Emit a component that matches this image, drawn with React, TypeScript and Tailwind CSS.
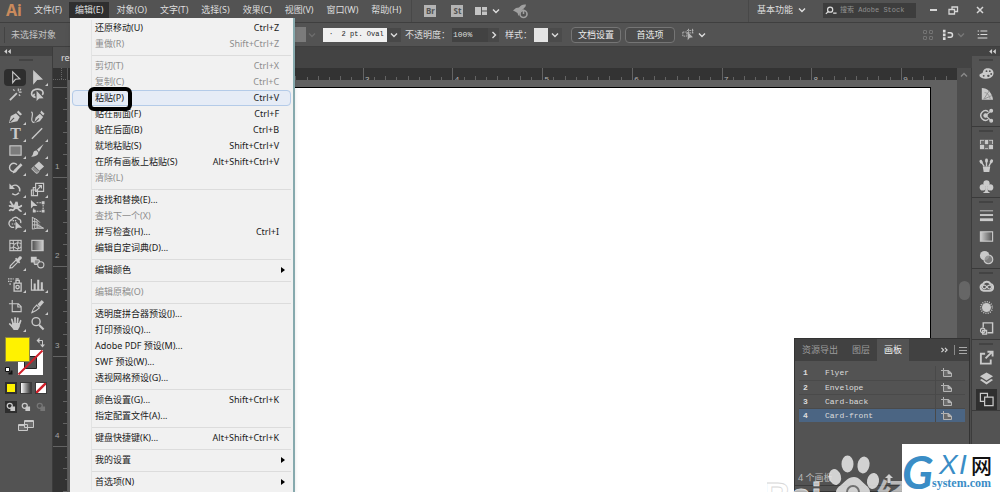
import React from "react";

type IconProps = { children: React.ReactNode; className?: string };

const Icon: React.FC<IconProps> = ({ children, className = "h-4 w-4" }) => (
  <svg
    viewBox="0 0 16 16"
    className={className}
    fill="none"
    stroke="currentColor"
    strokeWidth="1.2"
    aria-hidden="true"
  >
    {children}
  </svg>
);

const Chevron: React.FC<{ className?: string }> = ({
  className = "h-2 w-2",
}) => (
  <svg viewBox="0 0 8 8" className={className} fill="none" stroke="currentColor" strokeWidth="1.4" aria-hidden="true">
    <path d="M1 2.5 4 5.5 7 2.5" />
  </svg>
);

type Tool = { name: string; icon: React.ReactNode; more?: boolean; active?: boolean };

const toolGroups: Tool[][] = [
  [
    { name: "选择工具", active: true, icon: <path d="M5 2v11.5l3-3.6 4.6-.4z" /> },
    { name: "直接选择工具", more: true, icon: <path fill="currentColor" d="M4 1.5v12.5l3.4-4 5.1-.4z" /> },
    {
      name: "魔棒工具",
      icon: (
        <>
          <path strokeWidth="2" d="M2 14 9.5 6.5" />
          <path d="M11 1.5v3M14.5 5.5h-3M5.5 2.5l1.5 1.5M13 9.5 11.5 8M14 2l-1.5 1.5" />
        </>
      ),
    },
    {
      name: "套索工具",
      icon: (
        <>
          <path strokeWidth="1.8" d="M6 11C2.500 10.500 1 8 2 5.500 3.200 2.500 8 1.500 11.500 3c3 1.300 3 4 1.500 5.500M5 7.500c-1.500 1-1.500 3 .5 3" />
          <path fill="currentColor" stroke="none" d="M7 4v11l2.800-2.800 4.700-.2z" />
        </>
      ),
    },
  ],
  [
    {
      name: "钢笔工具",
      more: true,
      icon: (
        <>
          <path fill="currentColor" stroke="none" d="m1 15 2-7.500 5.500-3 4 4-2.500 4.500z" />
          <path fill="currentColor" stroke="none" d="m9.500 3.500 1.500-2 4 4-2 1.500z" />
          <path stroke="#535353" d="m2 14 4.500-4.500" />
        </>
      ),
    },
    {
      name: "曲率工具",
      icon: (
        <>
          <path fill="currentColor" stroke="none" d="m4.500 15 1.500-6 4.500-4 3.500 3.500-3.500 4.500zM11 4l1-2.500 3.500 3.500-1.500 2z" />
          <path stroke="#535353" d="m5 14.500 4.500-4.500" />
          <path d="M1.500 3C4.500 5 1 9 2 12.500c.3 1.500 1.500 2 2.500 2" />
        </>
      ),
    },
    {
      name: "文字工具",
      more: true,
      icon: (
        <text x="8" y="13.500" textAnchor="middle" fill="currentColor" stroke="none" fontSize="17" fontWeight="700" fontFamily="Liberation Serif, serif">
          T
        </text>
      ),
    },
    { name: "直线段工具", more: true, icon: <path strokeWidth="1.500" d="M2 13.500 13 2.500" /> },
    { name: "矩形工具", more: true, icon: <rect x="2" y="3" width="12" height="10" fill="#7c7c7c" /> },
    {
      name: "画笔工具",
      more: true,
      icon: (
        <>
          <path fill="currentColor" stroke="none" d="M14.500 1 7.500 7l2 2.500zM7 8l2 2.500c-.5 3-4 4.500-8 4 2-.8 2-2 2.500-4C4 8.500 5.500 7.800 7 8z" />
        </>
      ),
    },
    {
      name: "Shaper 工具",
      more: true,
      icon: (
        <>
          <path strokeWidth="1.500" d="M9.500 11A4.500 4.500 0 1 1 9.500 5" />
          <path strokeWidth="2.800" d="m7 12 7.500-7.500" />
          <path fill="currentColor" stroke="none" d="m5 14.500 1-3.500 2.500 2z" />
        </>
      ),
    },
    {
      name: "橡皮擦工具",
      more: true,
      icon: (
        <>
          <path fill="currentColor" stroke="none" d="m9.500 1.500 5.500 5.500-5 4.500L4.500 6z" />
          <path fill="#8e8e8e" strokeWidth="1" d="M4 7 1.800 9.500l4.500 4.500h1.500L10 12" />
        </>
      ),
    },
  ],
  [
    {
      name: "旋转工具",
      more: true,
      icon: (
        <>
          <path strokeWidth="1.600" d="M4 5a5 5 0 1 1 .5 7.500" strokeDasharray="13 1.500" />
          <path fill="currentColor" stroke="none" d="M1.500 1.500v6h6z" />
        </>
      ),
    },
    {
      name: "比例缩放工具",
      more: true,
      icon: <path d="M6 1.500h8.500V10H6zM1.500 8.500h6.500v6H1.500zM6 6H3.500v8.500M8 10v4.500M7 9l5-5M9 3.800h3.200V7" />,
    },
    {
      name: "宽度工具",
      more: true,
      icon: (
        <>
          <path strokeWidth="2" d="M2 2.500c2 1 1.500 4 4 4.500M1 7.500c3-1 4 2 6 0l2-4.500M9 3c2 2-.5 5 2 5.500s2-1.500 4-1.500M1.500 13c2-4 3 1 5-2s3-2 4.500-.5 2 3 3.500 2" />
          <circle cx="8.500" cy="8.500" r="1.800" fill="currentColor" />
        </>
      ),
    },
    {
      name: "自由变换工具",
      icon: (
        <>
          <path fill="currentColor" stroke="none" d="M1 1v9l2.500-2.500H8z" />
          <path strokeDasharray="2 1" d="M7 4h7v9H4v-3" />
          <path fill="currentColor" stroke="none" d="M12.500 2.500h3v3h-3zM12.500 11.500h3v3h-3zM3 11.500h3v3H3z" />
        </>
      ),
    },
    {
      name: "形状生成器工具",
      more: true,
      icon: (
        <>
          <path strokeWidth="1.400" d="M6.500 12a4 4 0 0 1-2.500-8 4 4 0 0 1 7-1c2 .5 3 2 2.500 4.500" />
          <path strokeDasharray="1.500 1" d="M4 8.500h4M5 5.500c1.500-1.500 3.500-1 4.500.5" />
          <path fill="currentColor" stroke="none" d="M8 5.500v9.500l2.500-2.500H15z" />
        </>
      ),
    },
    {
      name: "透视网格工具",
      more: true,
      icon: (
        <>
          <path strokeWidth="1" d="M2.500 1v13M2.500 1.500l5 2.500v9l-5 1M5 2.500V13M2.500 5.500l5 1M2.500 9.500h5M7.500 4l3 3M7.500 13h7M7.500 9.500l7 3.500" />
          <path fill="currentColor" fillOpacity=".4" stroke="none" d="M7.500 5.500 14.500 13.500h-7z" />
        </>
      ),
    },
  ],
  [
    {
      name: "网格工具",
      icon: (
        <>
          <rect x="2" y="2.500" width="12" height="11" />
          <path strokeWidth="1.100" d="M2 6c3-2 4 2 6 0s3-1 6 0M2 10.500c3 1 4-2 6 0s4 1 6-1M6 2.500c-2 3 2 4 0 6s1 3 0 5M10.500 2.500c1 3-2 4 0 6s-1 3 0 5" />
        </>
      ),
    },
    {
      name: "渐变工具",
      icon: (
        <>
          <defs>
            <linearGradient id="toolGradient">
              <stop offset="0" stopColor="#4a4a4a" />
              <stop offset="1" stopColor="#d0d0d0" />
            </linearGradient>
          </defs>
          <rect x="2" y="2.500" width="12" height="11" fill="url(#toolGradient)" />
        </>
      ),
    },
    {
      name: "吸管工具",
      more: true,
      icon: (
        <>
          <path d="m2 14 .5-2.500 6-6 2 2-6 6z" />
          <path fill="currentColor" stroke="none" d="m7.500 4 1.200-1 1.300 1 2-2.500c2-1 3.500 1 2.500 2.500L12 6.500l1 1.200L11.800 9z" />
        </>
      ),
    },
    {
      name: "混合工具",
      icon: (
        <>
          <path fill="currentColor" d="M1.500 2.500h5v5h-5z" />
          <rect x="4.500" y="5" width="5.500" height="5" rx="1" fill="#888" />
          <circle cx="11.500" cy="10.500" r="3.300" fill="#535353" />
        </>
      ),
    },
  ],
  [
    {
      name: "符号喷枪工具",
      more: true,
      icon: (
        <>
          <path strokeWidth="1.400" d="M6.500 6.500h7.500v8.500H6.500zM8.500 6V3.500h3.500V6M8 2h3.500" />
          <circle cx="10.200" cy="10.700" r="1.800" strokeWidth="1.400" />
          <path strokeWidth="1.500" strokeDasharray="1.500 1" d="M0 2h6M0 4.700h5M1.500 7.500h2" />
        </>
      ),
    },
    {
      name: "柱形图工具",
      more: true,
      icon: (
        <>
          <path d="M1.500 2v12h13.500" />
          <path strokeWidth="2.200" d="M5 14V7M8.800 14V3M12.600 14V5.500" />
        </>
      ),
    },
  ],
  [
    { name: "画板工具", icon: <path d="M4.500 1v3.500M1 5h3.500M4.500 5h6.500l3 3v5.500h-9.500zM10.500 5v3.500h3.500" /> },
    {
      name: "切片工具",
      more: true,
      icon: (
        <>
          <path d="M2 14.500c1-4 3-6.500 5-8l3 3c-2 2-4.500 4-8 5z" />
          <path fill="currentColor" stroke="none" d="M8 5.500 12.500 1 15 3.500l-4.500 5z" />
        </>
      ),
    },
    {
      name: "抓手工具",
      more: true,
      icon: (
        <>
          <path strokeWidth="1.800" strokeLinecap="round" d="M5.500 8.500 4 3.500M7.500 8V2M10 8l.5-5.500M12 9l1.500-4M5 11.500 1.800 8.500" />
          <path fill="currentColor" stroke="none" d="M4.500 7.500h8.500l-.5 4-2 3.500H6L3.500 11z" />
        </>
      ),
    },
    {
      name: "缩放工具",
      icon: (
        <>
          <circle cx="6.500" cy="6" r="4.300" strokeWidth="1.500" />
          <path strokeWidth="2.200" d="m9.800 9.500 4.700 4.800" />
        </>
      ),
    },
  ],
];

const DoubleArrow: React.FC = () => (
  <svg viewBox="0 0 8 6" className="h-[5px] w-[7px]" fill="#d0d0d0" aria-hidden="true">
    <path d="M3.500 0v6L0 3zM8 0v6L4.500 3z" />
  </svg>
);

const ToolBar: React.FC = () => (
  <aside className="flex w-[53px] shrink-0 flex-col border-r border-[#3c3c3c] bg-[#535353] text-[#c9c9c9]">
    <div className="flex h-[9px] shrink-0 items-center bg-[#434343] pl-1">
      <DoubleArrow />
    </div>
    <div className="flex h-[13px] shrink-0 justify-center pt-[3px]">
      <span className="h-[2px] w-[14px] bg-[#434343]" />
    </div>
    <div className="flex flex-col gap-[5px] px-1">
      {toolGroups.map((group, i) => (
        <div key={i} className="grid grid-cols-2">
          {group.map((tool) => (
            <button
              key={tool.name}
              type="button"
              aria-label={tool.name}
              className={
                tool.active
                  ? "relative flex h-[17px] items-center justify-center rounded-sm bg-[#2e2e2e]"
                  : "relative flex h-[17px] items-center justify-center"
              }
            >
              <Icon className="h-[15px] w-[15px]">{tool.icon}</Icon>
              {tool.more && (
                <svg viewBox="0 0 3 3" className="absolute right-0 bottom-0 h-[3px] w-[3px]" aria-hidden="true">
                  <path fill="currentColor" d="M3 0v3H0z" />
                </svg>
              )}
            </button>
          ))}
        </div>
      ))}
    </div>
    <div className="px-1 pt-[2px] pb-[2px]">
      <svg viewBox="0 0 44 42" className="h-[42px] w-[44px]" fill="none" aria-hidden="true">
        <path fill="#fff" d="M14 16h25v25H14z" />
        <path fill="#535353" stroke="#222" d="M20.500 22.500h12v12h-12z" />
        <path stroke="#d0202a" strokeWidth="2" d="M14.500 40.500 38.500 16.500" />
        <path fill="#fff200" stroke="#8f8a40" d="M1.500 3.500h24v24h-24z" />
        <path stroke="#c9c9c9" d="M34 6.500h4.500V11" />
        <path fill="#c9c9c9" d="M35.500 3.500v6l-3-3zM36 10.500h5l-2.500 3z" />
        <path fill="#fff" stroke="#111" d="M1.500 33.500h4v4h-4z" />
        <path stroke="#111" strokeWidth="2" d="M4.500 39.500h3v-3" />
      </svg>
    </div>
    <div className="flex gap-[3px] px-[5px] pt-1">
      <button type="button" aria-label="颜色" className="h-3 w-3 border-2 border-[#2e2e2e] bg-[#fff200]" />
      <button type="button" aria-label="渐变" className="h-3 w-3 border border-[#3a3a3a] bg-gradient-to-r from-white to-[#333]" />
      <button type="button" aria-label="无" className="h-3 w-3 border border-[#3a3a3a] bg-white">
        <svg viewBox="0 0 10 10" className="h-[10px] w-[10px]" aria-hidden="true">
          <path stroke="#d0202a" strokeWidth="2.500" d="M0 10 10 0" />
        </svg>
      </button>
    </div>
    <div className="flex gap-[3px] px-[5px] pt-[7px]">
      {["正常绘图", "背面绘图", "内部绘图"].map((name, i) => (
        <button
          key={name}
          type="button"
          aria-label={name}
          className={
            i === 0
              ? "flex h-3 w-3 items-center justify-center bg-[#2e2e2e]"
              : i === 1
                ? "flex h-3 w-3 items-center justify-center"
                : "flex h-3 w-3 items-center justify-center opacity-30"
          }
        >
          <Icon className="h-[10px] w-[10px]">
            <circle cx="6" cy="6" r="4" strokeWidth="2" />
            <path fill="currentColor" stroke="none" d="M8 7h6.500v7.500H7V10z" />
          </Icon>
        </button>
      ))}
    </div>
    <div className="flex justify-center pt-[6px]">
      <button type="button" aria-label="更改屏幕模式">
        <svg viewBox="0 0 18 13" className="h-[13px] w-[18px]" fill="#6c6c6c" stroke="currentColor" aria-hidden="true">
          <path d="M1.500 5.500h9v6h-9zM7.500 1.500h9v7h-9z" />
          <path d="M7.500 2.500h9M1.500 6.500h6" />
        </svg>
      </button>
    </div>
  </aside>
);

type MenuEntry = {
  label: string;
  keys?: string;
  disabled?: boolean;
  sub?: boolean;
  active?: boolean;
};

const editMenu: MenuEntry[][] = [
  [
    { label: "还原移动(U)", keys: "Ctrl+Z" },
    { label: "重做(R)", keys: "Shift+Ctrl+Z", disabled: true },
  ],
  [
    { label: "剪切(T)", keys: "Ctrl+X", disabled: true },
    { label: "复制(C)", keys: "Ctrl+C", disabled: true },
    { label: "粘贴(P)", keys: "Ctrl+V", active: true },
    { label: "贴在前面(F)", keys: "Ctrl+F" },
    { label: "贴在后面(B)", keys: "Ctrl+B" },
    { label: "就地粘贴(S)", keys: "Shift+Ctrl+V" },
    { label: "在所有画板上粘贴(S)", keys: "Alt+Shift+Ctrl+V" },
    { label: "清除(L)", disabled: true },
  ],
  [
    { label: "查找和替换(E)..." },
    { label: "查找下一个(X)", disabled: true },
    { label: "拼写检查(H)...", keys: "Ctrl+I" },
    { label: "编辑自定词典(D)..." },
  ],
  [{ label: "编辑颜色", sub: true }],
  [{ label: "编辑原稿(O)", disabled: true }],
  [
    { label: "透明度拼合器预设(J)..." },
    { label: "打印预设(Q)..." },
    { label: "Adobe PDF 预设(M)..." },
    { label: "SWF 预设(W)..." },
    { label: "透视网格预设(G)..." },
  ],
  [
    { label: "颜色设置(G)...", keys: "Shift+Ctrl+K" },
    { label: "指定配置文件(A)..." },
  ],
  [{ label: "键盘快捷键(K)...", keys: "Alt+Shift+Ctrl+K" }],
  [{ label: "我的设置", sub: true }],
  [{ label: "首选项(N)", sub: true }],
];

const EditMenu: React.FC = () => (
  <div className="absolute top-[18px] left-px z-20 w-[225px] border-r-2 border-[#86a9ad] bg-[#f1f1f1] px-[2px] py-[2px] text-[9px] text-[#1a1a1a] shadow-md">
    {editMenu.map((group, i) => (
      <div key={i}>
        {i > 0 && (
          <div className="flex h-[6px] items-center">
            <span className="h-full w-5 border-r border-[#e2e3e3]" />
            <span className="h-px flex-1 bg-[#dcdcdc]" />
          </div>
        )}
        {group.map((item) => (
          <button
            key={item.label}
            type="button"
            disabled={item.disabled}
            className={
              item.active
                ? "relative flex h-4 w-full items-center rounded-sm bg-[#e6ecf6] text-left whitespace-nowrap outline outline-[#b4cbe8] -outline-offset-1"
                : "flex h-4 w-full items-center text-left whitespace-nowrap disabled:text-[#8d8d8d]"
            }
          >
            <span className="h-full w-5 shrink-0 border-r border-[#e2e3e3]" />
            <span className="flex-1 pl-[3px]">{item.label}</span>
            {item.keys && <span className="pr-3">{item.keys}</span>}
            {item.sub && (
              <svg viewBox="0 0 4 6" className="mr-[6px] h-[6px] w-1" aria-hidden="true">
                <path d="M0 0v6l4-3z" />
              </svg>
            )}
            {item.active && (
              <span className="absolute -top-[3px] left-4 h-[24px] w-[44px] rounded-md border-4 border-black" />
            )}
          </button>
        ))}
      </div>
    ))}
  </div>
);

const menus = ["文件(F)", "编辑(E)", "对象(O)", "文字(T)", "选择(S)", "效果(C)", "视图(V)", "窗口(W)", "帮助(H)"];

const MenuBar: React.FC = () => (
  <header className="flex h-[23px] shrink-0 items-start border-b border-[#3f3f3f] text-[9px] text-[#dedede]">
    <span className="w-7 pl-[6px] text-[16px] leading-5 font-bold text-[#c98a5c]">Ai</span>
    <nav className="flex gap-px">
      {menus.map((menu) => (
        <div key={menu} className="relative pt-[2px]">
          <button
            type="button"
            className={
              menu === "编辑(E)"
                ? "h-4 bg-[#2f2f2f] px-[6px] leading-4 whitespace-nowrap"
                : "h-4 px-[6px] leading-4 whitespace-nowrap"
            }
          >
            {menu}
          </button>
          {menu === "编辑(E)" && <EditMenu />}
        </div>
      ))}
    </nav>
    <div className="ml-1 flex h-[22px] items-center border-l border-[#484848] pl-3">
      <button type="button" className="h-3 w-3 bg-[#b4b4b4] text-center text-[8px] leading-3 font-bold text-[#535353]">
        Br
      </button>
      <button type="button" className="ml-[15px] h-3 w-3 bg-[#b4b4b4] text-center text-[8px] leading-3 font-bold text-[#535353]">
        St
      </button>
      <button type="button" aria-label="排列文档" className="ml-3 flex items-center gap-[5px]">
        <svg viewBox="0 0 12 8" className="h-2 w-3" fill="#c4c4c4" aria-hidden="true">
          <path d="M0 0h6v8H0zM7 0h5v3.500H7zM7 4.500h5V8H7z" />
        </svg>
        <Chevron />
      </button>
      <button type="button" aria-label="GPU 性能" className="ml-3 text-[#a0a0a0]">
        <Icon>
          <path fill="currentColor" stroke="none" d="M1 7.500 4 5l3-.5C9 2 11 1 14 1.500l-.5 2L8.500 9l-2 4-1-3L3 8.500z" />
          <circle cx="11.500" cy="11" r="3.500" fill="#535353" strokeWidth="1.600" />
          <path strokeWidth="1.500" d="M11.500 6.500V11" />
        </Icon>
      </button>
    </div>
    <div className="ml-auto flex h-[22px] items-center border-l border-[#484848] pb-[2px] pl-2">
      <select aria-label="工作区" className="w-[36px] appearance-none">
        <option>基本功能</option>
      </select>
      <Chevron className="ml-[5px] h-2 w-2" />
      <label className="ml-[17px] flex h-[15px] w-[93px] items-center gap-[3px] bg-[#3d3d3d] pl-[2px]">
        <svg viewBox="0 0 14 10" className="h-[9px] w-3 shrink-0" fill="none" stroke="currentColor" strokeWidth="1.400" aria-hidden="true">
          <circle cx="6" cy="4" r="3" />
          <path d="M4 6 1 9M9.500 8h4" />
        </svg>
        <input
          type="search"
          aria-label="搜索 Adobe Stock"
          placeholder="搜索 Adobe Stock"
          className="w-full min-w-0 font-['Liberation_Mono','Noto_Sans_CJK_SC',monospace] text-[7px] placeholder:text-[#909090]"
        />
      </label>
      <button type="button" aria-label="最小化" className="ml-3 flex h-4 w-[10px] items-center justify-center">
        <span className="h-[2px] w-[7px] bg-[#d6d6d6]" />
      </button>
      <button type="button" aria-label="还原" className="ml-[10px]">
        <svg viewBox="0 0 11 9" className="h-[9px] w-[11px]" fill="none" stroke="#d6d6d6" strokeWidth="1.300" aria-hidden="true">
          <path d="M1 3.500h5.500V8H1zM4 3V1h5.500v4.500H7" />
        </svg>
      </button>
      <button type="button" aria-label="关闭" className="mr-4 ml-[17px]">
        <svg viewBox="0 0 8 8" className="h-2 w-2" stroke="#d6d6d6" strokeWidth="1.500" aria-hidden="true">
          <path d="m1 1 6 6M7 1 1 7" />
        </svg>
      </button>
    </div>
  </header>
);

const ControlBar: React.FC = () => (
  <div className="flex h-6 shrink-0 items-center border-b border-[#3f3f3f] text-[9px] whitespace-nowrap text-[#dcdcdc]">
    <div className="flex w-[286px] items-center">
      <span className="ml-1 h-4 w-px bg-[#434343]" />
      <span className="ml-[6px] text-[#c4c4c4]">未选择对象</span>
    </div>
    <span className="h-[15px] w-5 bg-[#7b7b7b]" />
    <Chevron className="mr-[7px] ml-[2px] h-2 w-2 text-[#6c6c6c]" />
    <label className="flex items-center">
      <select
        aria-label="画笔定义"
        className="h-[14px] w-[64px] appearance-none bg-[#f0f0f0] pl-[6px] font-['Liberation_Mono',monospace] text-[7px] text-[#222]"
      >
        <option>{"·\u00a0\u00a02 pt. Oval"}</option>
      </select>
      <span className="flex h-[14px] w-[14px] items-center justify-center bg-[#484848]">
        <Chevron />
      </span>
    </label>
    <label htmlFor="opacity" className="ml-1">
      不透明度：
    </label>
    <input
      id="opacity"
      defaultValue="100%"
      className="ml-[2px] h-[14px] w-9 bg-[#424242] pl-[1px] font-['Liberation_Mono',monospace] text-[8px]"
    />
    <button type="button" aria-label="不透明度滑块" className="flex h-[14px] w-[11px] items-center justify-center bg-[#484848]">
      <Chevron className="h-2 w-2 -rotate-90" />
    </button>
    <span className="ml-[6px]">样式：</span>
    <button type="button" aria-label="图形样式" className="ml-[2px] flex items-center">
      <span className="h-[14px] w-[14px] bg-[#e4e4e4]" />
      <span className="flex h-[14px] w-[14px] items-center justify-center bg-[#4b4b4b]">
        <Chevron />
      </span>
    </button>
    <button type="button" className="ml-[9px] h-4 w-[50px] rounded-sm border border-[#757575] bg-[#4b4b4b] text-[#ececec]">
      文档设置
    </button>
    <button type="button" className="ml-1 h-4 w-[50px] rounded-sm border border-[#757575] bg-[#4b4b4b] text-[#ececec]">
      首选项
    </button>
    <button type="button" aria-label="选择类似的对象" className="ml-[7px] flex items-center gap-[3px]">
      <Icon className="h-[13px] w-[13px] text-[#b4b4b4]">
        <path strokeDasharray="2 1" d="M1 5h5v5H1zM8 1v6M13 1v6M6 3h9M6 6h9" />
        <path fill="currentColor" stroke="none" d="M7 5v10l2.500-3 4-.5z" />
      </Icon>
      <Chevron />
    </button>
    <div className="ml-auto flex items-center pr-3">
      <Icon className="h-3 w-3 text-[#7d7d7d]">
        <path d="M2 2h4v4H2zM10 2h4v4h-4zM2 10h4v4H2zM10 10h4v4h-4z" strokeDasharray="3 1" />
      </Icon>
      <button type="button" aria-label="对齐像素" className="ml-2 flex items-center gap-[3px]">
        <Icon className="h-3 w-3">
          <path strokeWidth="3.500" strokeDasharray="3.500 1.500" d="M3 1v14" />
          <path strokeWidth="2" d="M7.500 5h3.500a2.500 2.500 0 0 1 0 6H7.500" />
        </Icon>
        <Chevron className="h-2 w-2 text-[#777]" />
      </button>
      <button type="button" aria-label="控制面板菜单" className="ml-3">
        <Icon className="h-[11px] w-[11px]">
          <path strokeWidth="1.500" d="M5 3h10M5 8h10M1 13h14M1 3h2M1 8h2" />
        </Icon>
      </button>
    </div>
  </div>
);

// one inch on the rulers, in pixels
const UNIT = 89.7;
const EIGHTHS = Array.from({ length: 88 }, (_, i) => i);

const HorizontalRuler: React.FC = () => (
  <div className="h-3 shrink-0 overflow-hidden bg-[#333]">
    <svg className="h-full w-full" aria-hidden="true">
      {EIGHTHS.map((i) => {
        const x = Math.round(25.6 + (i * UNIT) / 8);
        return <path key={i} stroke="#636363" d={i % 8 === 0 ? `M${x}.5 0v12` : i % 2 === 0 ? `M${x}.5 8v4` : `M${x}.5 9v3`} />;
      })}
      {[3, 4, 5, 6, 7, 8, 9].map((n) => (
        <text key={n} x={28 + n * UNIT} y="14" fill="#b4b4b4" fontSize="8" fontFamily="Liberation Sans, sans-serif">
          {n}
        </text>
      ))}
    </svg>
  </div>
);

const VerticalRuler: React.FC = () => (
  <div className="w-[15px] shrink-0 overflow-hidden border-r border-[#5a5a5a] bg-[#333]">
    <svg className="h-full w-full" aria-hidden="true">
      <path stroke="#666" strokeDasharray="1 1" d="M0 11.500h14M8.500 0v12" />
      {EIGHTHS.slice(0, 40).map((i) => {
        const y = Math.round(19 + (i * UNIT) / 8);
        return <path key={i} stroke="#636363" d={i % 8 === 0 ? `M0 ${y}.5h14` : i % 2 === 0 ? `M10 ${y}.5h4` : `M12 ${y}.5h2`} />;
      })}
      {[1, 2, 3, 4].map((n) => (
        <text key={n} x="2" y={11 + n * UNIT} fill="#a4a4a4" fontSize="8" fontFamily="Liberation Sans, sans-serif">
          {n}
        </text>
      ))}
    </svg>
  </div>
);

const artboards = ["Flyer", "Envelope", "Card-back", "Card-front"];

const Watermark: React.FC = () => (
  <svg viewBox="0 0 140 37" className="pointer-events-none absolute right-[65px] bottom-0 h-[37px] w-[140px]" aria-hidden="true">
    <text x="-3" y="54" fill="#fff" fillOpacity=".65" stroke="#d8d8d8" strokeWidth=".8" fontSize="37" fontWeight="700" fontFamily="Liberation Sans, sans-serif">
      Bai
    </text>
    <text x="110" y="52" fill="#fff" fillOpacity=".6" fontSize="32" fontWeight="700" fontFamily="Noto Sans CJK SC, sans-serif">
      经
    </text>
    <g fill="#e4e4e4" fillOpacity=".88">
      <ellipse cx="80.500" cy="9" rx="6" ry="8.500" />
      <ellipse cx="96.500" cy="10" rx="6" ry="8.500" transform="rotate(10 96.500 10)" />
      <ellipse cx="68" cy="22" rx="6" ry="8" transform="rotate(-15 68 22)" />
      <ellipse cx="106" cy="26" rx="6" ry="8" transform="rotate(10 106 26)" />
      <path d="M87 22c5 0 8 5 13 9 2 2 3 4 3 6H69c0-3 2-5 5-7 5-4 7-8 13-8z" />
    </g>
    <path fill="none" stroke="#707070" strokeWidth="2" d="M80 37a6 6 0 0 1 12 0" />
  </svg>
);

const ArtboardPanel: React.FC = () => (
  <section className="absolute right-[2px] bottom-0 flex h-[154px] w-[176px] flex-col border border-[#333] bg-[#535353] text-[9px] text-[#dcdcdc]">
    <div className="flex h-[22px] shrink-0 items-center bg-[#414141] text-[#9c9c9c]">
      <button type="button" className="px-[7px] whitespace-nowrap">资源导出</button>
      <button type="button" className="px-[7px] whitespace-nowrap">图层</button>
      <button type="button" className="h-full bg-[#535353] px-[7px] whitespace-nowrap text-[#f0f0f0]">
        画板
      </button>
      <span className="mr-[6px] ml-auto">
        <svg viewBox="0 0 8 6" className="h-[6px] w-[7px]" fill="none" stroke="#d6d6d6" strokeWidth="1.300" aria-hidden="true">
          <path d="m.5.5 2.500 2.500L.5 5.500M4.500.5 7 3 4.500 5.500" />
        </svg>
      </span>
      <span className="mr-1 h-[10px] w-px bg-[#8a8a8a]" />
      <button type="button" aria-label="面板菜单" className="mr-[2px]">
        <svg viewBox="0 0 8 7" className="h-[7px] w-2" stroke="#a8a8a8" aria-hidden="true">
          <path d="M0 .5h8M0 3.500h8M0 6.500h8" />
        </svg>
      </button>
    </div>
    <div className="px-1 pt-[5px]">
      <table className="w-full table-fixed font-['Liberation_Mono',monospace] text-[8px] leading-[13px]">
        <tbody>
          {artboards.map((name, i) => (
            <tr key={name} className={i === 3 ? "h-[14px] bg-[#4b6583]" : "h-[14px] border-b border-[#4a4a4a]"}>
              <td className="w-[26px] p-0 pl-1 font-bold">{i + 1}</td>
              <td className="p-0">{name}</td>
              <td className="w-[30px] border-l border-[#494949] p-0 pl-[5px]">
                <svg viewBox="0 0 11 9" className="h-[9px] w-[11px]" fill="none" stroke="#b4b4b4" aria-hidden="true">
                  <path d="M2.500 0v2.500M0 2.500h2.500" />
                  <path fill="#6a6a6a" d="M2.500 2.500h5l3 2.500v3.500h-8z" />
                  <path fill="#b4b4b4" d="M7 2.500V5.500h3.500z" />
                </svg>
              </td>
            </tr>
          ))}
        </tbody>
      </table>
    </div>
    <div className="mt-auto mb-[5px] flex h-[15px] items-center border-b border-[#3c3c3c] pl-[3px]">
      <span className="w-[87px] text-[#bcbcbc]">4 个画板</span>
      <button type="button" aria-label="上移">
        <svg viewBox="0 0 8 9" className="h-[9px] w-2" fill="#d0d0d0" aria-hidden="true">
          <path d="M4 0 8 4H5.500v5h-3V4H0z" />
        </svg>
      </button>
    </div>
  </section>
);

const Workspace: React.FC = () => (
  <main className="relative flex min-w-0 flex-1 flex-col overflow-hidden">
    <div className="flex h-[21px] shrink-0 bg-[#434343] text-[9px] text-[#dcdcdc]">
      <button type="button" className="bg-[#505050] px-2 whitespace-nowrap">
        resume.ai
      </button>
    </div>
    <div className="flex min-h-0 flex-1">
      <VerticalRuler />
      <div className="flex min-w-0 flex-1 flex-col">
        <HorizontalRuler />
        <div className="flex flex-1 bg-[#616161] pt-[7px] pr-[26px] pl-1">
          <div className="flex-1 border-t border-r border-black bg-white" />
        </div>
      </div>
      <div className="flex w-[15px] shrink-0 flex-col items-center border-r border-[#3c3c3c] bg-[#4d4d4d] pt-[3px] text-[#8a8a8a]">
        <Chevron className="h-2 w-2 rotate-180" />
        <span className="mt-[202px] h-[19px] w-[11px] rounded-md bg-[#666]" />
      </div>
    </div>
    <ArtboardPanel />
    <Watermark />
  </main>
);

const dockGroups: Tool[][] = [
  [
    {
      name: "颜色",
      icon: (
        <>
          <path fill="currentColor" stroke="none" d="M9 2.500c4 0 6.500 2 6.500 5 0 3.500-3 6-7.500 6-4 0-7.500-1.500-7.500-3.500C.5 8 3 8.500 4 7c.5-2 1.500-4.500 5-4.500z" />
          <g fill="#535353" stroke="none">
            <circle cx="8" cy="5.500" r="1" />
            <circle cx="11.500" cy="5.500" r="1" />
            <circle cx="13" cy="8.500" r="1" />
            <circle cx="10" cy="10.500" r="1.300" />
            <circle cx="5" cy="10.500" r="1" />
          </g>
        </>
      ),
    },
    {
      name: "颜色参考",
      icon: (
        <>
          <path fill="currentColor" stroke="none" d="M3 1c6 0 11 5 12 12.500H3z" />
          <path stroke="#909090" strokeWidth="1" d="M5 13l6-9M5 13l9-4M6 6c3 0 5 3 6 7" />
        </>
      ),
    },
    {
      name: "颜色主题",
      icon: (
        <>
          <path strokeWidth="1.500" d="M10 4a5 5 0 1 0 0 8" />
          <circle cx="7" cy="8" r="1.800" fill="currentColor" />
          <path d="m7 8 6-5M7 8l6 5.500" />
          <circle cx="13" cy="3" r="1.500" fill="currentColor" />
          <circle cx="13" cy="13.500" r="1.500" fill="currentColor" />
        </>
      ),
    },
  ],
  [
    {
      name: "色板",
      icon: (
        <>
          <path fill="currentColor" stroke="none" d="M1 3h14v10H1z" />
          <path fill="#6a6a6a" stroke="none" d="M2 4h3.500v3.500H2zM10.500 4H14v3.500h-3.500zM6.300 8.500h3.500V12H6.300z" />
          <path stroke="#535353" strokeWidth=".8" d="M1 8h14M5.900 3v10M10.200 3v10" />
        </>
      ),
    },
    {
      name: "画笔",
      icon: (
        <>
          <path fill="currentColor" stroke="none" d="M4 9h8l-1 6H5z" />
          <path strokeWidth="1.500" d="M5.500 9 3 5M8 9V4M10.500 9 13 4" />
          <path strokeWidth="3" strokeLinecap="round" d="m2.500 4.500-.5-1M8 3.500V2M13 4l.5-1" />
        </>
      ),
    },
    {
      name: "符号",
      icon: (
        <>
          <g fill="currentColor" stroke="none">
            <circle cx="8" cy="4.500" r="3.300" />
            <circle cx="4" cy="9" r="3.300" />
            <circle cx="12" cy="9" r="3.300" />
            <path d="M7 7h2l.5 6 2.500 2H4l2.500-2z" />
          </g>
        </>
      ),
    },
  ],
  [
    {
      name: "描边",
      icon: (
        <>
          <path strokeWidth="1" d="M1 3h14" />
          <path strokeWidth="2" d="M1 7.500h14" />
          <path strokeWidth="3" d="M1 12.500h14" />
        </>
      ),
    },
    {
      name: "渐变",
      icon: (
        <>
          <defs>
            <linearGradient id="dockGradient">
              <stop offset="0" stopColor="#d0d0d0" />
              <stop offset="1" stopColor="#505050" />
            </linearGradient>
          </defs>
          <rect x="1.500" y="3" width="13" height="10" fill="url(#dockGradient)" />
        </>
      ),
    },
    {
      name: "透明度",
      icon: (
        <>
          <circle cx="6" cy="6" r="5" fill="currentColor" stroke="none" />
          <circle cx="10" cy="10" r="4.700" fill="#8a8a8a" fillOpacity=".8" />
        </>
      ),
    },
  ],
  [
    {
      name: "库",
      icon: (
        <>
          <path
            strokeWidth="2.200"
            d="M5 12.500a3.600 3.600 0 0 1-.8-7A4.500 4.500 0 0 1 12 5a3.800 3.800 0 0 1-.5 7.500z"
          />
          <path strokeWidth="1.300" d="M10.500 10.500 7 7a2 2 0 1 0-1 3.400c1.500-.4 2.500-2.500 4-3.400a2 2 0 1 1 1 3.500" />
        </>
      ),
    },
    {
      name: "外观",
      icon: (
        <>
          <circle cx="8" cy="8" r="4.800" fill="currentColor" stroke="none" />
          <circle cx="8" cy="8" r="6.200" strokeDasharray="1 1.400" strokeWidth="1.600" />
        </>
      ),
    },
    {
      name: "图形样式",
      icon: (
        <>
          <path strokeWidth="1.500" d="M4.500 7V2h10v10.500H9" />
          <circle cx="4" cy="10" r="2.400" />
          <path strokeWidth="1.500" d="M4 10v4h4v-4z" />
        </>
      ),
    },
  ],
  [
    { name: "资源导出", icon: <path strokeWidth="2" d="M6.500 4H2v10.500h10.500V10M7 9l7-7M9 1.800h5.500V7" /> },
    {
      name: "图层",
      icon: (
        <>
          <path fill="currentColor" stroke="none" d="m8 1.500 7 4-7 4.500-7-4.500z" />
          <path fill="currentColor" stroke="none" d="m1 9.500 2-1 5 3.300 5-3.300 2 1L8 14.500z" />
        </>
      ),
    },
    {
      name: "画板",
      active: true,
      icon: <path strokeWidth="1.300" d="M5.500 10H1.500V1.500H9V5M6 5.500h9v9H6z" />,
    },
  ],
];

const PanelDock: React.FC = () => (
  <aside className="flex w-7 shrink-0 flex-col bg-[#535353] text-[#cacaca]">
    <div className="flex h-[9px] shrink-0 items-center justify-end bg-[#434343] pr-1">
      <DoubleArrow />
    </div>
    {dockGroups.map((group, i) => (
      <div key={i} className="flex flex-col items-center border-b border-[#3a3a3a]">
        <span className="mt-[3px] mb-[2px] h-[2px] w-[14px] bg-[#434343]" />
        {group.map((panel) => (
          <button
            key={panel.name}
            type="button"
            aria-label={panel.name}
            className={
              panel.active
                ? "flex h-[21px] w-[21px] items-center justify-center bg-[#2f2f2f]"
                : "flex h-[21px] w-[21px] items-center justify-center"
            }
          >
            <Icon className="h-[15px] w-[15px]">{panel.icon}</Icon>
          </button>
        ))}
      </div>
    ))}
  </aside>
);

const SiteLogo: React.FC = () => (
  <div className="absolute right-0 bottom-0 z-30 bg-white">
    <svg viewBox="0 0 98 48" className="h-12 w-[98px]" role="img" aria-label="GXI网 system.com">
      <g fill="#3a8dc6" fontFamily="Liberation Sans, sans-serif">
        <text x="0" y="45" fontSize="46" fontStyle="italic" fontWeight="700" fontFamily="Lato, sans-serif">
          G
        </text>
        <text x="37" y="30" fontSize="28" fontStyle="italic">
          X
        </text>
        <text x="57" y="30" fontSize="28" fontStyle="italic">
          I
        </text>
        <text x="30" y="43" fontSize="12" fontWeight="700" fontFamily="Liberation Serif, serif">
          system.com
        </text>
      </g>
      <text x="69" y="29" fill="#111" fontSize="21" fontWeight="500" fontFamily="Noto Sans CJK SC, sans-serif">
        网
      </text>
    </svg>
  </div>
);

const App: React.FC = () => {
  return (
    <div className="relative flex h-screen flex-col overflow-hidden bg-[#535353] font-['Noto_Sans','Noto_Sans_CJK_SC',sans-serif]">
      <MenuBar />
      <ControlBar />
      <div className="flex min-h-0 flex-1">
        <ToolBar />
        <Workspace />
        <PanelDock />
      </div>
      <SiteLogo />
    </div>
  );
};

export default App;
